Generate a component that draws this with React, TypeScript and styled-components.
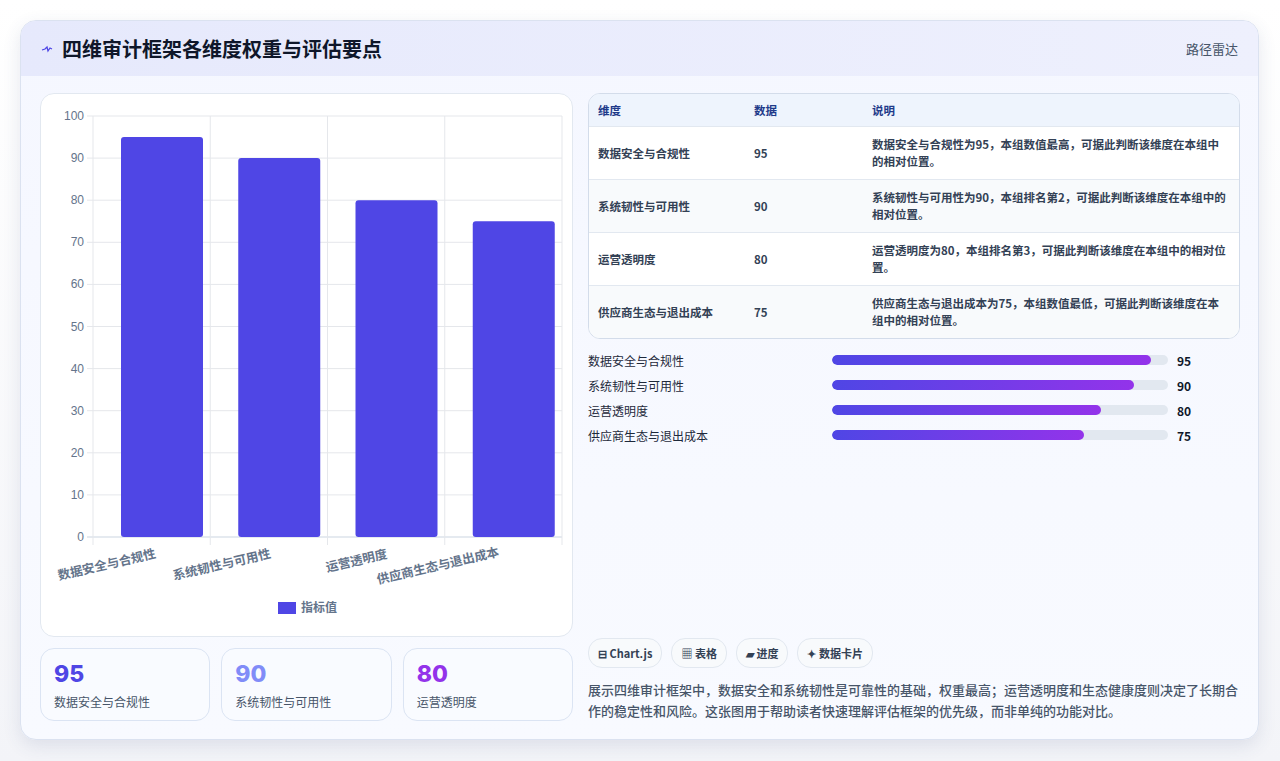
import React from "react";
import styled, { createGlobalStyle } from "styled-components";

const G = createGlobalStyle`
  body { margin: 0; background: #f1f3f8; font-family: "Noto Sans CJK SC", "Noto Sans", sans-serif; }
`;
const Page = styled.div`padding: 20px 21px 21px 20px; height: 761px; box-sizing: border-box; background: linear-gradient(#fff, #f3f4f8);`;
const Card = styled.div`
  height: 720px; box-sizing: border-box; border: 1px solid #dbe2f0; border-radius: 16px; overflow: hidden;
  background: linear-gradient(180deg, #f5f7ff, #f8faff); box-shadow: 0 6px 18px rgba(60,70,120,0.12);
  display: flex; flex-direction: column;
`;
const Header = styled.div`
  height: 55px; flex: none; display: flex; align-items: center; justify-content: space-between;
  padding: 0 20px 0 20px; background: linear-gradient(90deg, #e6e9fc, #eef0fd);
`;
const Title = styled.h1`margin: 0; font-size: 20px; font-weight: 700; color: #0f172a; display: flex; align-items: center; gap: 9px;`;
const Tag = styled.span`font-size: 13px; color: #475569;`;
const Body = styled.div`flex: 1; display: grid; grid-template-columns: 533px 652px; gap: 15px; padding: 17px 19px 18px 19px;`;
const Col = styled.div`display: flex; flex-direction: column; min-height: 0;`;
const ChartCard = styled.div`height: 544px; box-sizing: border-box; background: #fff; border: 1px solid #e2e8f0; border-radius: 14px;`;
const Stats = styled.div`display: grid; grid-template-columns: repeat(3, 1fr); gap: 11px; margin-top: 11px;`;
const Stat = styled.div`height: 73px; box-sizing: border-box; border: 1px solid #dbe4f3; border-radius: 14px; background: #f9fbff; padding: 10px 13px;`;
const StatNum = styled.div<{ c: string }>`font-family: Inter, sans-serif; font-weight: 800; font-size: 23px; color: ${p => p.c}; line-height: 30px;`;
const StatLbl = styled.div`font-size: 12px; color: #475569; margin-top: 4px;`;
const Table = styled.div`border: 1px solid #d3dcea; border-radius: 12px; overflow: hidden; background: #fff;`;
const Row = styled.div<{ head?: boolean; alt?: boolean }>`
  display: grid; grid-template-columns: 156px 118px 1fr; padding: 0 10px 0 9px; align-items: center;
  height: ${p => (p.head ? 32 : 53)}px; box-sizing: border-box;
  background: ${p => (p.head ? "#eef4fd" : p.alt ? "#f8fafc" : "#fff")};
  border-top: ${p => (p.head ? "none" : "1px solid #e2e8f0")};
  font-size: 11.5px; font-weight: 700; color: ${p => (p.head ? "#1e3a8a" : "#334155")}; line-height: 17px;
`;
const Bars = styled.div`display: flex; flex-direction: column; gap: 7px; margin-top: 12px;`;
const BarRow = styled.div`display: grid; grid-template-columns: 244px 336px 1fr; align-items: center; height: 18px; font-size: 12px; color: #1e293b;`;
const Track = styled.div`height: 10px; border-radius: 5px; background: #e2e8f0; overflow: hidden;`;
const Fill = styled.div`height: 100%; border-radius: 5px; background: linear-gradient(90deg, #4f46e5, #9333ea);`;
const Val = styled.span`padding-left: 9px; font-weight: 700; font-size: 12px; color: #0f172a;`;
const Chips = styled.div`display: flex; gap: 9px; margin-top: auto;`;
const Chip = styled.span`height: 28px; padding: 0 9px; border: 1px solid #e2e8f0; border-radius: 14px; background: #f8fafc; display: flex; align-items: center; gap: 4px; font-size: 11px; font-weight: 700; color: #334155;`;
const Desc = styled.p`margin: 11px 0 0; font-size: 13px; line-height: 21px; color: #475569; font-weight: 500;`;

const data = [
  { n: "数据安全与合规性", v: 95, d: "数据安全与合规性为95，本组数值最高，可据此判断该维度在本组中的相对位置。" },
  { n: "系统韧性与可用性", v: 90, d: "系统韧性与可用性为90，本组排名第2，可据此判断该维度在本组中的相对位置。" },
  { n: "运营透明度", v: 80, d: "运营透明度为80，本组排名第3，可据此判断该维度在本组中的相对位置。" },
  { n: "供应商生态与退出成本", v: 75, d: "供应商生态与退出成本为75，本组数值最低，可据此判断该维度在本组中的相对位置。" },
];

function Chart() {
  const x0 = 52, y0 = 443, top = 22, w = 469, h = y0 - top, cw = w / 4;
  const labels = [[18, 486], [133, 486], [286, 478], [337, 490]];
  return (
    <svg width="533" height="544" style={{ display: "block" }}>
      {Array.from({ length: 11 }, (_, i) => {
        const y = y0 - (h * i) / 10;
        return <g key={i}>
          <line x1={x0 - 6} x2={x0 + w} y1={y} y2={y} stroke={i === 0 ? "#cbd5e1" : "#e5e7eb"} />
          <text x={x0 - 9} y={y + 4} textAnchor="end" fontSize="12" fill="#64748b" fontFamily="Liberation Sans, sans-serif">{i * 10}</text>
        </g>;
      })}
      {[0, 1, 2, 3, 4].map(i => <line key={i} x1={x0 + i * cw} x2={x0 + i * cw} y1={top} y2={y0 + 8} stroke="#e5e7eb" />)}
      {data.map((d, i) => {
        const bh = (h * d.v) / 100;
        return <rect key={i} x={x0 + i * cw + 28} y={y0 - bh} width={82} height={bh} rx="3" fill="#4f46e5" />;
      })}
      {data.map((d, i) => (
        <text key={i} transform={`translate(${labels[i][0]},${labels[i][1]}) rotate(-13)`} fontSize="12.5" fontWeight="700" fill="#64748b">{d.n}</text>
      ))}
      <rect x="237" y="508" width="18" height="12" fill="#4f46e5" />
      <text x="260" y="518" fontSize="12" fill="#64748b" fontWeight="700">指标值</text>
    </svg>
  );
}

export default function App() {
  const stat = [["95", "#4f46e5", "数据安全与合规性"], ["90", "#818cf8", "系统韧性与可用性"], ["80", "#9333ea", "运营透明度"]];
  return (
    <Page>
      <G />
      <Card>
        <Header>
          <Title>
            <svg width="12" height="10" viewBox="0 0 12 10"><path d="M1 6 L4 5 L6 3 L7 7 L9 4 L11 5" stroke="#4f46e5" strokeWidth="1.3" fill="none" /></svg>
            四维审计框架各维度权重与评估要点
          </Title>
          <Tag>路径雷达</Tag>
        </Header>
        <Body>
          <Col>
            <ChartCard><Chart /></ChartCard>
            <Stats>
              {stat.map(s => <Stat key={s[0]}><StatNum c={s[1]}>{s[0]}</StatNum><StatLbl>{s[2]}</StatLbl></Stat>)}
            </Stats>
          </Col>
          <Col>
            <Table>
              <Row head><span>维度</span><span>数据</span><span>说明</span></Row>
              {data.map((d, i) => <Row key={i} alt={i % 2 === 1}><span>{d.n}</span><span>{d.v}</span><span>{d.d}</span></Row>)}
            </Table>
            <Bars>
              {data.map((d, i) => <BarRow key={i}><span>{d.n}</span><Track><Fill style={{ width: `${d.v}%` }} /></Track><Val>{d.v}</Val></BarRow>)}
            </Bars>
            <Chips>
              <Chip>⊟ Chart.js</Chip><Chip>▦ 表格</Chip><Chip>▰ 进度</Chip><Chip>✦ 数据卡片</Chip>
            </Chips>
            <Desc>展示四维审计框架中，数据安全和系统韧性是可靠性的基础，权重最高；运营透明度和生态健康度则决定了长期合作的稳定性和风险。这张图用于帮助读者快速理解评估框架的优先级，而非单纯的功能对比。</Desc>
          </Col>
        </Body>
      </Card>
    </Page>
  );
}
